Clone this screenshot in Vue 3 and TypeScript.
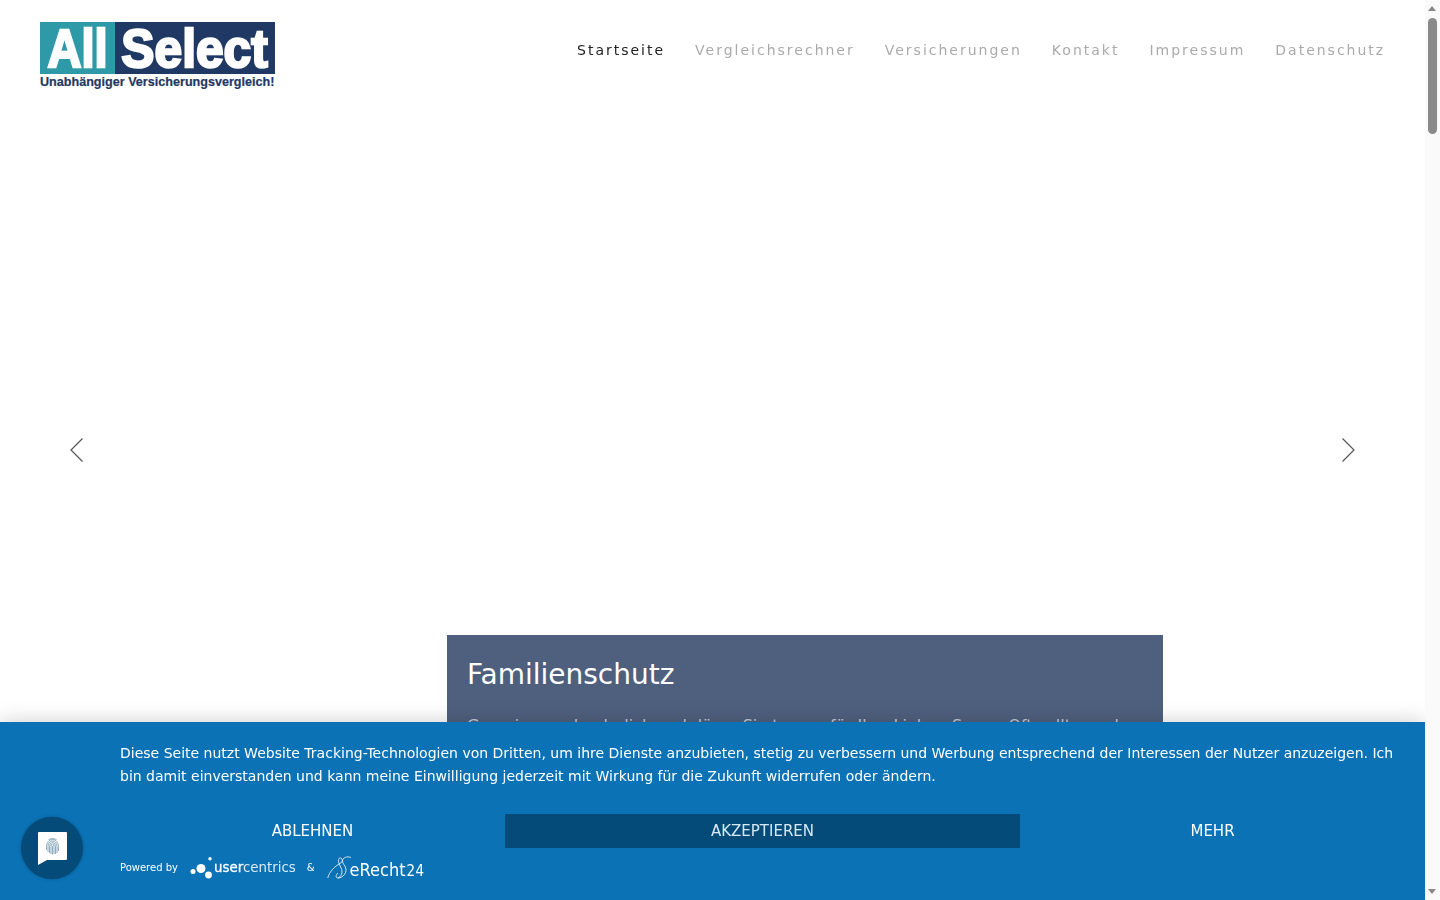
<script setup lang="ts">
const navItems = [
  { label: 'Startseite', active: true },
  { label: 'Vergleichsrechner', active: false },
  { label: 'Versicherungen', active: false },
  { label: 'Kontakt', active: false },
  { label: 'Impressum', active: false },
  { label: 'Datenschutz', active: false },
]
</script>

<template>
  <div class="page">
    <header class="site-header">
      <a class="logo" href="#">
        <div class="logo-mark">
          <div class="logo-box all"><span>All</span></div>
          <div class="logo-box select"><span>Select</span></div>
        </div>
        <div class="logo-claim">Unabhängiger Versicherungsvergleich!</div>
      </a>
      <nav class="main-nav">
        <a v-for="item in navItems" :key="item.label" href="#" :class="{ active: item.active }">{{ item.label }}</a>
      </nav>
    </header>

    <section class="hero">
      <button class="slide-arrow prev" aria-label="Zurück">
        <svg viewBox="0 0 16 26" width="16" height="26" fill="none" stroke="#555" stroke-width="1.2">
          <path d="M13.5 1.5 2 13l11.5 11.5" />
        </svg>
      </button>
      <button class="slide-arrow next" aria-label="Weiter">
        <svg viewBox="0 0 16 26" width="16" height="26" fill="none" stroke="#555" stroke-width="1.2">
          <path d="M2.500 1.500 14 13 2.500 24.500" />
        </svg>
      </button>
      <div class="caption">
        <h2>Familienschutz</h2>
        <p>Gemeinsam durch dick und dünn. Sie tragen für Ihre Lieben Sorge. Oft sollte auch noch an Ihre Geschäftsfähigkeit gedacht werden.</p>
      </div>
    </section>
  </div>

  <aside class="consent">
    <div class="consent-body">
      <p>Diese Seite nutzt Website Tracking-Technologien von Dritten, um ihre Dienste anzubieten, stetig zu verbessern und Werbung entsprechend der Interessen der Nutzer anzuzeigen. Ich bin damit einverstanden und kann meine Einwilligung jederzeit mit Wirkung für die Zukunft widerrufen oder ändern.</p>
      <div class="consent-actions">
        <button class="btn-plain">ABLEHNEN</button>
        <button class="btn-accept">AKZEPTIEREN</button>
        <button class="btn-plain">MEHR</button>
      </div>
      <div class="powered">
        <span class="powered-by">Powered by</span>
        <svg class="uc-dots" viewBox="0 0 24 24" width="24" height="24" fill="#fff">
          <circle cx="3" cy="14.500" r="2.500" />
          <circle cx="11" cy="11.500" r="4.500" />
          <circle cx="18.500" cy="18" r="3.400" />
          <circle cx="20" cy="1.800" r="1.700" />
        </svg>
        <span class="uc-name"><b>user</b>centrics</span>
        <span class="amp">&amp;</span>
        <svg class="er-mark" viewBox="0 0 24 24" width="24" height="24" fill="none" stroke="#fff" stroke-width="0.800">
          <path d="M24 1.500c-4-1.500-8 0-8.500 3-.5 3 3 5 3.500 8.500.5 4-3 9-8 9-2.500 0-2.500-3 0-5" />
          <path d="M.8 22C2 16 8 10 13 7.500c2-1 3-3 1.500-5-1.500-1.500-3.500 0-3 3 .5 4 4 7 3.500 11-.3 2.500-2 4.500-4 5.500" />
        </svg>
        <span class="er-name">eRecht<small>24</small></span>
      </div>
    </div>
    <div class="privacy-btn">
      <svg viewBox="-1 0 30 33" width="30" height="33">
        <path d="M1 0h27a1 1 0 0 1 1 1v26a1 1 0 0 1-1 1H9L0 33V1a1 1 0 0 1 1-1z" fill="#fff" />
        <g fill="none" stroke="#6f98ae" stroke-width="0.800">
          <path d="M8.500 18v-3.500a6 7 0 0 1 12 0V19" />
          <path d="M10 20v-5.500a4.500 5.500 0 0 1 9 0V21" />
          <path d="M11.500 21v-6.500a3 4 0 0 1 6 0V22" />
          <path d="M13 22v-7.500a1.500 2.500 0 0 1 3 0V22" />
          <path d="M14.500 22.500V14" />
          <path d="M10.500 7.500a8 8 0 0 1 8 0" />
        </g>
      </svg>
    </div>
  </aside>

  <div class="scrollbar">
    <span class="sb-arrow up" />
    <span class="sb-thumb" />
    <span class="sb-arrow down" />
  </div>
</template>

<style scoped>
.page {
  height: 900px;
  margin-right: 15px;
  overflow: hidden;
  background: #fff;
  font-family: "DejaVu Sans", sans-serif;
}

.site-header {
  height: 100px;
  padding: 22px 40px 0;
  display: flex;
  justify-content: space-between;
  box-sizing: border-box;
}

.logo {
  display: block;
  width: 235px;
  text-decoration: none;
}

.logo-mark {
  height: 52px;
  display: flex;
  font-family: "Liberation Sans", Arial, sans-serif;
  font-size: 54px;
  font-weight: 700;
  line-height: 52px;
  color: #fff;
}

.logo-box {
  display: flex;
  justify-content: center;
}

.logo-box span {
  display: block;
  -webkit-text-stroke: 2.500px #fff;
}

.logo-box.all {
  width: 75px;
  background: #2e9aa8;
}

.logo-box.all span {
  transform: scaleX(0.87);
}

.logo-box.select {
  flex: 1;
  background: #1f3864;
}

.logo-box.select span {
  transform: scaleX(0.92);
}

.logo-claim {
  margin-top: 2px;
  font-family: "Liberation Sans", Arial, sans-serif;
  font-size: 12.600px;
  font-weight: 700;
  line-height: 13px;
  color: #1f3864;
  white-space: nowrap;
  -webkit-text-stroke: 0.200px #1f3864;
}

.main-nav {
  display: flex;
  gap: 30px;
  padding-top: 20px;
  font-size: 14px;
  line-height: 16px;
  letter-spacing: 2px;
  height: 16px;
  will-change: transform;
}

.main-nav a {
  color: #aaa;
  text-decoration: none;
}

.main-nav a.active {
  color: #222;
}

.hero {
  position: relative;
  height: 800px;
}

.slide-arrow {
  position: absolute;
  top: 337px;
  padding: 0;
  border: 0;
  background: none;
  line-height: 0;
}

.slide-arrow.prev {
  left: 69px;
}

.slide-arrow.next {
  right: 69px;
}

.caption {
  position: absolute;
  top: 535px;
  left: 447px;
  width: 716px;
  height: 200px;
  padding: 21px 20px 0;
  box-sizing: border-box;
  background: #4f607f;
  color: #fff;
}

.caption h2 {
  margin: 0;
  font-size: 28px;
  font-weight: 400;
  line-height: 38px;
}

.caption p {
  margin: 20px 0 0;
  font-size: 16px;
  line-height: 24px;
  color: #c5ccd8;
}

.consent {
  position: fixed;
  left: 0;
  bottom: 0;
  width: 1425px;
  height: 178px;
  background: #0a72b5;
  box-shadow: 0 0 20px rgba(0, 0, 0, 0.2);
  color: #fff;
  font-family: "DejaVu Sans", sans-serif;
}

.consent-body {
  padding: 20px 30px 0 120px;
}

.consent-body p {
  margin: 0;
  font-size: 14px;
  line-height: 23px;
}

.consent-actions {
  display: grid;
  grid-template-columns: 385px 515px 385px;
  margin-top: 26px;
}

.consent-actions button {
  height: 34px;
  padding: 0;
  border: 0;
  font-family: inherit;
  font-size: 15px;
  color: #fff;
}

.btn-plain {
  background: none;
}

.consent-actions .btn-accept {
  background: #044b7a;
  color: #d5e8f5;
}

.powered {
  display: flex;
  align-items: center;
  height: 39px;
}

.powered-by {
  font-size: 10px;
  margin-right: 12px;
}

.uc-dots {
  margin-top: 2px;
}

.uc-name {
  font-size: 13.400px;
  color: rgba(255, 255, 255, 0.85);
}

.uc-name b {
  font-weight: 400;
  color: #fff;
  -webkit-text-stroke: 0.300px #fff;
}

.amp {
  margin: 0 12px 0 11px;
  font-size: 10px;
}

.er-mark {
  margin-top: 1px;
}

.er-name {
  padding-top: 3px;
  margin-left: -1px;
  font-family: "DejaVu Sans Condensed", "DejaVu Sans", sans-serif;
  font-size: 18px;
}

.er-name small {
  margin-left: 1px;
  font-size: 15px;
  letter-spacing: 0.500px;
}

.privacy-btn {
  position: absolute;
  left: 21px;
  top: 95px;
  width: 62px;
  height: 62px;
  border-radius: 50%;
  background: #044b7a;
  display: flex;
  align-items: center;
  justify-content: center;
  box-shadow: 0 0 3px rgba(0, 0, 0, 0.3);
}

.scrollbar {
  position: fixed;
  top: 0;
  right: 0;
  bottom: 0;
  width: 15px;
  background: #fafafa;
}

.sb-thumb {
  position: absolute;
  top: 18px;
  left: 3px;
  width: 9px;
  height: 116px;
  border-radius: 5px;
  background: #8a8a8a;
}

.sb-arrow {
  position: absolute;
  left: 3px;
  width: 0;
  height: 0;
  border-left: 4.500px solid transparent;
  border-right: 4.500px solid transparent;
}

.sb-arrow.up {
  top: 6px;
  border-bottom: 5px solid #888;
}

.sb-arrow.down {
  bottom: 6px;
  border-top: 5px solid #888;
}
</style>
